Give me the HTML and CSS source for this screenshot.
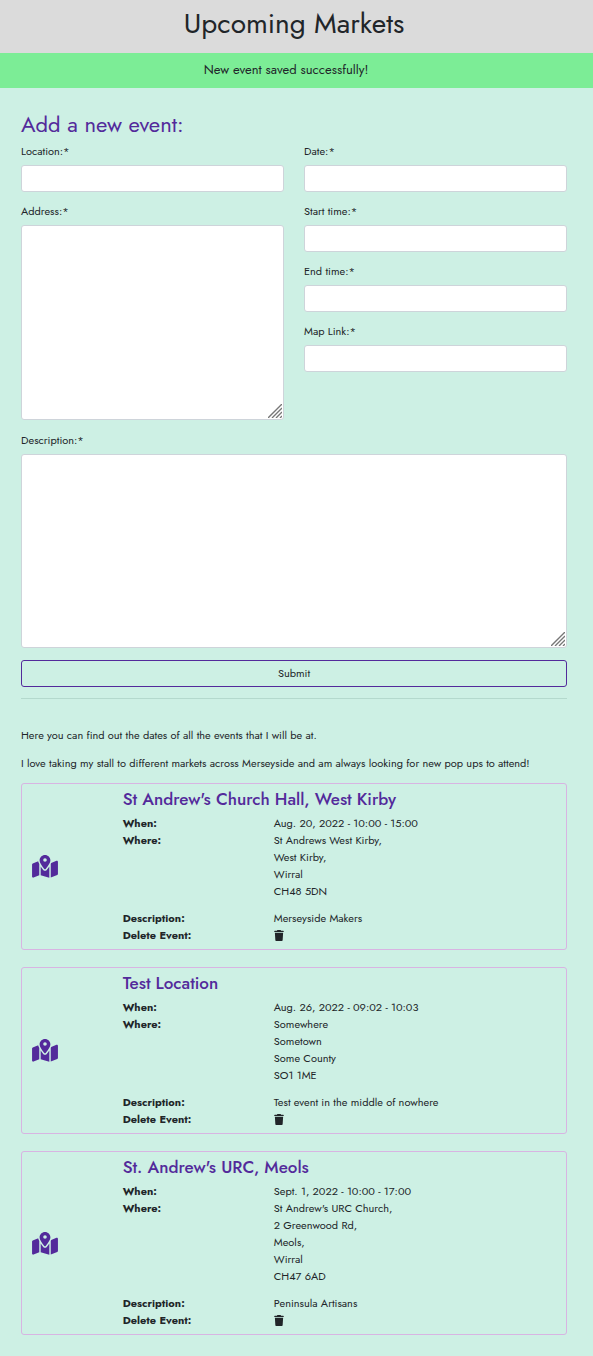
FILE: index.html
```
<!DOCTYPE html>
<html lang="en">
<head>
<meta charset="utf-8">
<meta name="viewport" content="width=device-width, initial-scale=1">
<title>Upcoming Markets</title>
<link rel="stylesheet" href="styles.css">
</head>
<body>
<svg class="sprite" aria-hidden="true">
  <symbol id="map" viewBox="0 0 576 512"><path d="M408 120c0 54.6-73.1 151.9-105.2 192c-7.7 9.6-22 9.6-29.6 0C241.1 271.9 168 174.6 168 120C168 53.7 221.7 0 288 0s120 53.7 120 120zm8 80.4c3.5-6.9 6.7-13.8 9.6-20.6c.5-1.2 1-2.5 1.5-3.7l116-46.4C558.9 123.4 576 135 576 152V422.8c0 9.8-6 18.6-15.1 22.3L416 503V200.4zM137.6 138.3c2.4 14.1 7.2 28.3 12.8 41.5c2.9 6.8 6.1 13.7 9.6 20.6V451.8L32.9 502.7C17.1 509 0 497.4 0 480.4V209.6c0-9.8 6-18.6 15.1-22.3l122.6-49zM327.8 332c13.9-17.4 35.7-45.7 56.2-77V504.3L192 449.4V255c20.5 31.3 42.3 59.6 56.2 77c20.5 25.6 59.1 25.6 79.6 0zM288 152a40 40 0 1 0 0-80 40 40 0 1 0 0 80z"/></symbol>
  <symbol id="trash" viewBox="0 0 448 512"><path d="M135.2 17.7L128 32H32C14.3 32 0 46.3 0 64S14.3 96 32 96H416c17.7 0 32-14.3 32-32s-14.3-32-32-32H320l-7.2-14.3C307.4 6.8 296.3 0 284.2 0H163.8c-12.1 0-23.2 6.8-28.6 17.7zM416 128H32L53.2 467c1.6 25.3 22.6 45 47.9 45H346.9c25.3 0 46.3-19.7 47.9-45L416 128z"/></symbol>
  <symbol id="grip" viewBox="0 0 14 14"><path d="M0 14 14 0M4 14 14 4M8 14 14 8M12 14 14 12"/></symbol>
</svg>
<header class="page-header"><h1>Upcoming Markets</h1></header>
<div class="message" role="status">New event saved successfully!</div>
<main class="content">
  <h2>Add a new event:</h2>
  <form class="event-form">
    <div class="form-columns">
      <div class="form-column">
        <div class="field"><label for="location">Location:*</label><input id="location" type="text" required></div>
        <div class="field"><label for="address">Address:*</label><div class="area"><textarea id="address" required></textarea><svg class="grip" aria-hidden="true"><use href="#grip"/></svg></div></div>
      </div>
      <div class="form-column">
        <div class="field"><label for="date">Date:*</label><input id="date" type="text" required></div>
        <div class="field"><label for="start">Start time:*</label><input id="start" type="text" required></div>
        <div class="field"><label for="end">End time:*</label><input id="end" type="text" required></div>
        <div class="field"><label for="link">Map Link:*</label><input id="link" type="text" required></div>
      </div>
    </div>
    <div class="field"><label for="description">Description:*</label><div class="area"><textarea id="description" required></textarea><svg class="grip" aria-hidden="true"><use href="#grip"/></svg></div></div>
    <button class="submit" type="submit">Submit</button>
  </form>
  <hr>
  <div class="intro">
    <p>Here you can find out the dates of all the events that I will be at.</p>
    <p>I love taking my stall to different markets across Merseyside and am always looking for new pop ups to attend!</p>
  </div>
  <div class="events">
    <article class="event">
      <a class="map-link" href="#" aria-label="View map"><svg><use href="#map"/></svg></a>
      <div class="details">
        <h3>St Andrew's Church Hall, West Kirby</h3>
        <dl>
          <dt>When:</dt><dd>Aug. 20, 2022 - 10:00 - 15:00</dd>
          <dt>Where:</dt><dd class="where">St Andrews West Kirby,<br>West Kirby,<br>Wirral<br>CH48 5DN</dd>
          <dt>Description:</dt><dd>Merseyside Makers</dd>
          <dt>Delete Event:</dt><dd><a class="delete" href="#" aria-label="Delete event"><svg><use href="#trash"/></svg></a></dd>
        </dl>
      </div>
    </article>
    <article class="event">
      <a class="map-link" href="#" aria-label="View map"><svg><use href="#map"/></svg></a>
      <div class="details">
        <h3>Test Location</h3>
        <dl>
          <dt>When:</dt><dd>Aug. 26, 2022 - 09:02 - 10:03</dd>
          <dt>Where:</dt><dd class="where">Somewhere<br>Sometown<br>Some County<br>SO1 1ME</dd>
          <dt>Description:</dt><dd>Test event in the middle of nowhere</dd>
          <dt>Delete Event:</dt><dd><a class="delete" href="#" aria-label="Delete event"><svg><use href="#trash"/></svg></a></dd>
        </dl>
      </div>
    </article>
    <article class="event">
      <a class="map-link" href="#" aria-label="View map"><svg><use href="#map"/></svg></a>
      <div class="details">
        <h3>St. Andrew's URC, Meols</h3>
        <dl>
          <dt>When:</dt><dd>Sept. 1, 2022 - 10:00 - 17:00</dd>
          <dt>Where:</dt><dd class="where">St Andrew's URC Church,<br>2 Greenwood Rd,<br>Meols,<br>Wirral<br>CH47 6AD</dd>
          <dt>Description:</dt><dd>Peninsula Artisans</dd>
          <dt>Delete Event:</dt><dd><a class="delete" href="#" aria-label="Delete event"><svg><use href="#trash"/></svg></a></dd>
        </dl>
      </div>
    </article>
  </div>
</main>
</body>
</html>
```
FILE: styles.css
```
* { box-sizing: border-box; }
body {
  margin: 0;
  background: #cdf0e4;
  color: #212529;
  font: 11px/17px Jost, Lato, sans-serif;
}
h1, h2, h3, p, dl, dd { margin: 0; }
.sprite { display: none; }
.page-header {
  padding: 7px 26px 12px 21px;
  background: #dbdbdb;
  text-align: center;
}
h1 { font-size: 28px; line-height: 34px; font-weight: 400; }
.message {
  padding: 8px 21px 10px 0;
  background: #7ced96;
  font-size: 13px;
  text-align: center;
}
.content { padding: 23px 26px 21px 21px; }
h2 {
  margin-bottom: 6px;
  color: #532a9b;
  font-size: 22px;
  line-height: 26px;
  font-weight: 400;
}
.event-form { display: flex; flex-direction: column; gap: 12px; }
.form-columns { display: grid; grid-template-columns: 1fr 1fr; gap: 20px; }
.form-column { display: flex; flex-direction: column; gap: 11px; }
.field { display: flex; flex-direction: column; gap: 5px; }
input, textarea {
  display: block;
  width: 100%;
  height: 27px;
  padding: 4px 8px;
  border: 1px solid #ced4da;
  border-radius: 3px;
  background: #fff;
  color: inherit;
  font: inherit;
}
textarea { height: 195px; resize: vertical; }
#description { height: 194px; }
textarea::-webkit-resizer { display: none; }
.area { position: relative; }
.grip {
  position: absolute;
  right: 2px;
  bottom: 2px;
  width: 14px;
  height: 14px;
  fill: none;
  stroke: #777;
  stroke-width: 1.4;
  pointer-events: none;
}
.submit {
  height: 27px;
  padding: 0 8px;
  border: 1px solid #532a9b;
  border-radius: 3px;
  background: transparent;
  color: inherit;
  font: inherit;
}
hr {
  height: 1px;
  margin: 11px 0 28px;
  border: 0;
  background: #b4d9cd;
}
.intro { display: flex; flex-direction: column; gap: 11px; margin-bottom: 11px; }
.events { display: flex; flex-direction: column; gap: 17px; }
.event {
  display: grid;
  grid-template-columns: 1fr 5fr;
  align-items: center;
  border: 1px solid #d8b4e2;
  border-radius: 3px;
}
.map-link { padding-left: 10px; color: #532a9b; }
.map-link svg { display: block; width: 26px; height: 23px; fill: currentColor; }
.details { padding: 5px 0; }
h3 {
  margin-bottom: 6px;
  padding-left: 10px;
  color: #532a9b;
  font-size: 17px;
  line-height: 20px;
  font-weight: 500;
}
dl { display: grid; grid-template-columns: 1fr 2fr; }
dt, dd { padding-left: 10px; }
dt { font-weight: 700; }
.where { padding-bottom: 10px; }
.delete { display: flex; width: 10px; height: 17px; align-items: center; color: inherit; }
.delete svg { width: 10px; height: 11px; fill: currentColor; }
```
